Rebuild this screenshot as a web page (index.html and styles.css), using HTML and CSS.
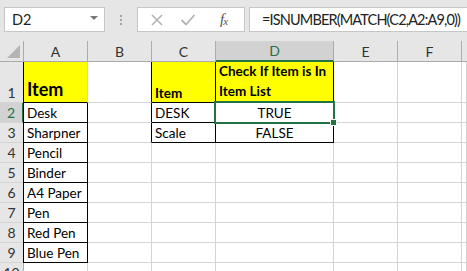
FILE: index.html
```html
<!DOCTYPE html>
<html>
<head>
  <meta charset="UTF-8">
  <title>Item List Check</title>
  <link rel="stylesheet" href="styles.css">
</head>
<body>
  <div class="toolbar">
    <div class="name-box">
      <span>D2</span>
      <span class="caret"></span>
    </div>
    <div class="dots"><i></i><i></i><i></i></div>
    <div class="fx-buttons">
      <svg class="ico" width="14" height="14" viewBox="0 0 14 14"><path d="M2 2 L12 12 M12 2 L2 12" stroke="#b3b3b3" stroke-width="1.6" fill="none"/></svg>
      <svg class="ico" width="16" height="14" viewBox="0 0 16 14"><path d="M1.5 7 L6 11.5 L14.5 2" stroke="#b3b3b3" stroke-width="1.8" fill="none"/></svg>
      <span class="fx"><i>f</i><sub>x</sub></span>
    </div>
    <div class="formula">=ISNUMBER(MATCH(C2,A2:A9,0))</div>
  </div>

  <div class="sheet">
    <div class="hd corner"><span class="tri"></span></div>
    <div class="hd">A</div>
    <div class="hd">B</div>
    <div class="hd">C</div>
    <div class="hd sel-col">D</div>
    <div class="hd">E</div>
    <div class="hd">F</div>
    <div class="hd edge"></div>

    <div class="rh">1</div>
    <div class="c yel bl bb big">Item</div>
    <div class="c rb"></div>
    <div class="c yel bb rb bold">Item</div>
    <div class="c yel bb rb bold wrap">Check If Item is In Item List</div>
    <div class="c"></div>
    <div class="c"></div>
    <div class="c"></div>

    <div class="rh sel-row">2</div>
    <div class="c bl bb rb">Desk</div>
    <div class="c rb"></div>
    <div class="c bb rb">DESK</div>
    <div class="c bb rb mid active">TRUE</div>
    <div class="c"></div>
    <div class="c"></div>
    <div class="c"></div>

    <div class="rh">3</div>
    <div class="c bl bb rb">Sharpner</div>
    <div class="c rb"></div>
    <div class="c bb rb">Scale</div>
    <div class="c bb rb mid">FALSE</div>
    <div class="c"></div>
    <div class="c"></div>
    <div class="c"></div>

    <div class="rh">4</div>
    <div class="c bl bb rb">Pencil</div>
    <div class="c"></div><div class="c"></div><div class="c"></div><div class="c"></div><div class="c"></div><div class="c"></div>

    <div class="rh">5</div>
    <div class="c bl bb rb">Binder</div>
    <div class="c"></div><div class="c"></div><div class="c"></div><div class="c"></div><div class="c"></div><div class="c"></div>

    <div class="rh">6</div>
    <div class="c bl bb rb">A4 Paper</div>
    <div class="c"></div><div class="c"></div><div class="c"></div><div class="c"></div><div class="c"></div><div class="c"></div>

    <div class="rh">7</div>
    <div class="c bl bb rb">Pen</div>
    <div class="c"></div><div class="c"></div><div class="c"></div><div class="c"></div><div class="c"></div><div class="c"></div>

    <div class="rh">8</div>
    <div class="c bl bb rb">Red Pen</div>
    <div class="c"></div><div class="c"></div><div class="c"></div><div class="c"></div><div class="c"></div><div class="c"></div>

    <div class="rh">9</div>
    <div class="c bl bb rb">Blue Pen</div>
    <div class="c"></div><div class="c"></div><div class="c"></div><div class="c"></div><div class="c"></div><div class="c"></div>

    <div class="rh">10</div>
    <div class="c"></div><div class="c"></div><div class="c"></div><div class="c"></div><div class="c"></div><div class="c"></div><div class="c"></div>
  </div>
</body>
</html>
```

FILE: styles.css
```css
body {
  margin: 0;
  width: 467px;
  height: 271px;
  overflow: hidden;
  background-color: #ffffff;
  font-family: Lato, 'Liberation Sans', sans-serif;
}
.toolbar {
  display: flex;
  align-items: flex-start;
  height: 41px;
  padding: 7px 0 0 4px;
  box-sizing: border-box;
  background-color: #e6e6e6;
}
.name-box {
  display: flex;
  align-items: center;
  justify-content: space-between;
  width: 101px;
  height: 25px;
  box-sizing: border-box;
  padding: 0 6px 0 7px;
  background-color: #fff;
  border: 1px solid #c6c6c6;
  font-family: Lato, sans-serif;
  font-size: 14.5px;
  color: #222;
}
.caret {
  width: 0;
  height: 0;
  border-left: 4px solid transparent;
  border-right: 4px solid transparent;
  border-top: 4px solid #777;
  margin-top: -3px;
}
.dots {
  width: 32px;
  height: 25px;
  display: flex;
  flex-direction: column;
  align-items: center;
  justify-content: center;
  gap: 2px;
}
.dots i {
  width: 2px;
  height: 2px;
  background-color: #a6a6a6;
}
.fx-buttons {
  display: flex;
  align-items: center;
  width: 108px;
  height: 25px;
  box-sizing: border-box;
  padding: 0 0 0 12px;
  background-color: #fff;
  border: 1px solid #c6c6c6;
}
.fx-buttons .ico {
  margin-right: 16px;
}
.fx-buttons .ico + .ico {
  margin-right: 24px;
}
.fx {
  font-family: 'Liberation Serif', serif;
  font-size: 15px;
  color: #555;
}
.fx sub {
  font-size: 11px;
  font-style: italic;
  vertical-align: -1px;
  margin-left: -1px;
}
.formula {
  flex: 1;
  height: 25px;
  box-sizing: border-box;
  margin-left: 4px;
  margin-right: -2px;
  padding: 3px 0 0 12px;
  background-color: #fff;
  border: 1px solid #c6c6c6;
  font-family: Lato, sans-serif;
  font-size: 14.5px;
  letter-spacing: -0.85px;
  color: #222;
  white-space: nowrap;
  overflow: hidden;
}
.sheet {
  display: grid;
  grid-template-columns: 24px 64px 64px 64px 118px 64px 64px 5px;
  grid-template-rows: 21px 41px repeat(9, 20px);
  font-size: 13.5px;
  color: #000;
}
.hd {
  display: flex;
  align-items: center;
  justify-content: center;
  background-color: #e6e6e6;
  border-right: 1px solid #ababab;
  border-bottom: 1px solid #ababab;
  box-sizing: border-box;
  color: #333;
  font-size: 14px;
}
.hd.edge {
  border-right: none;
}
.corner {
  position: relative;
}
.tri {
  position: absolute;
  right: 3px;
  bottom: 3px;
  width: 0;
  height: 0;
  border-left: 13px solid transparent;
  border-bottom: 13px solid #b4b4b4;
}
.sel-col {
  background-color: #d2d2d2;
  border-bottom: 2px solid #217346;
  color: #217346;
}
.rh {
  display: flex;
  align-items: flex-end;
  justify-content: center;
  padding-bottom: 1px;
  background-color: #e6e6e6;
  border-right: 1px solid #ababab;
  border-bottom: 1px solid #d4d4d4;
  box-sizing: border-box;
  color: #333;
  font-size: 14px;
}
.sel-row {
  background-color: #d2d2d2;
  border-right: 2px solid #217346;
  color: #217346;
}
.c {
  display: flex;
  align-items: flex-end;
  padding: 0 0 1px 3px;
  border-right: 1px solid #d4d4d4;
  border-bottom: 1px solid #d4d4d4;
  box-sizing: border-box;
  white-space: nowrap;
  overflow: visible;
}
.yel {
  background-color: #ffff00;
}
.bl {
  border-left: 1px solid #000;
  margin-left: -1px;
}
.rb {
  border-right-color: #000;
}
.bb {
  border-bottom-color: #000;
}
.big {
  font-size: 18px;
  font-weight: 700;
  padding-bottom: 2px;
}
.bold {
  font-weight: 700;
}
.wrap {
  white-space: normal;
  line-height: 20px;
  padding-right: 2px;
}
.mid {
  justify-content: center;
  padding-left: 0;
}
.active {
  position: relative;
}
.active::after {
  content: '';
  position: absolute;
  left: -2px;
  top: -2px;
  right: -2px;
  bottom: -2px;
  border: 2px solid #217346;
}
.active::before {
  content: '';
  position: absolute;
  right: -4px;
  bottom: -4px;
  width: 5px;
  height: 5px;
  background-color: #217346;
  border: 1px solid #fff;
  z-index: 1;
}
```
